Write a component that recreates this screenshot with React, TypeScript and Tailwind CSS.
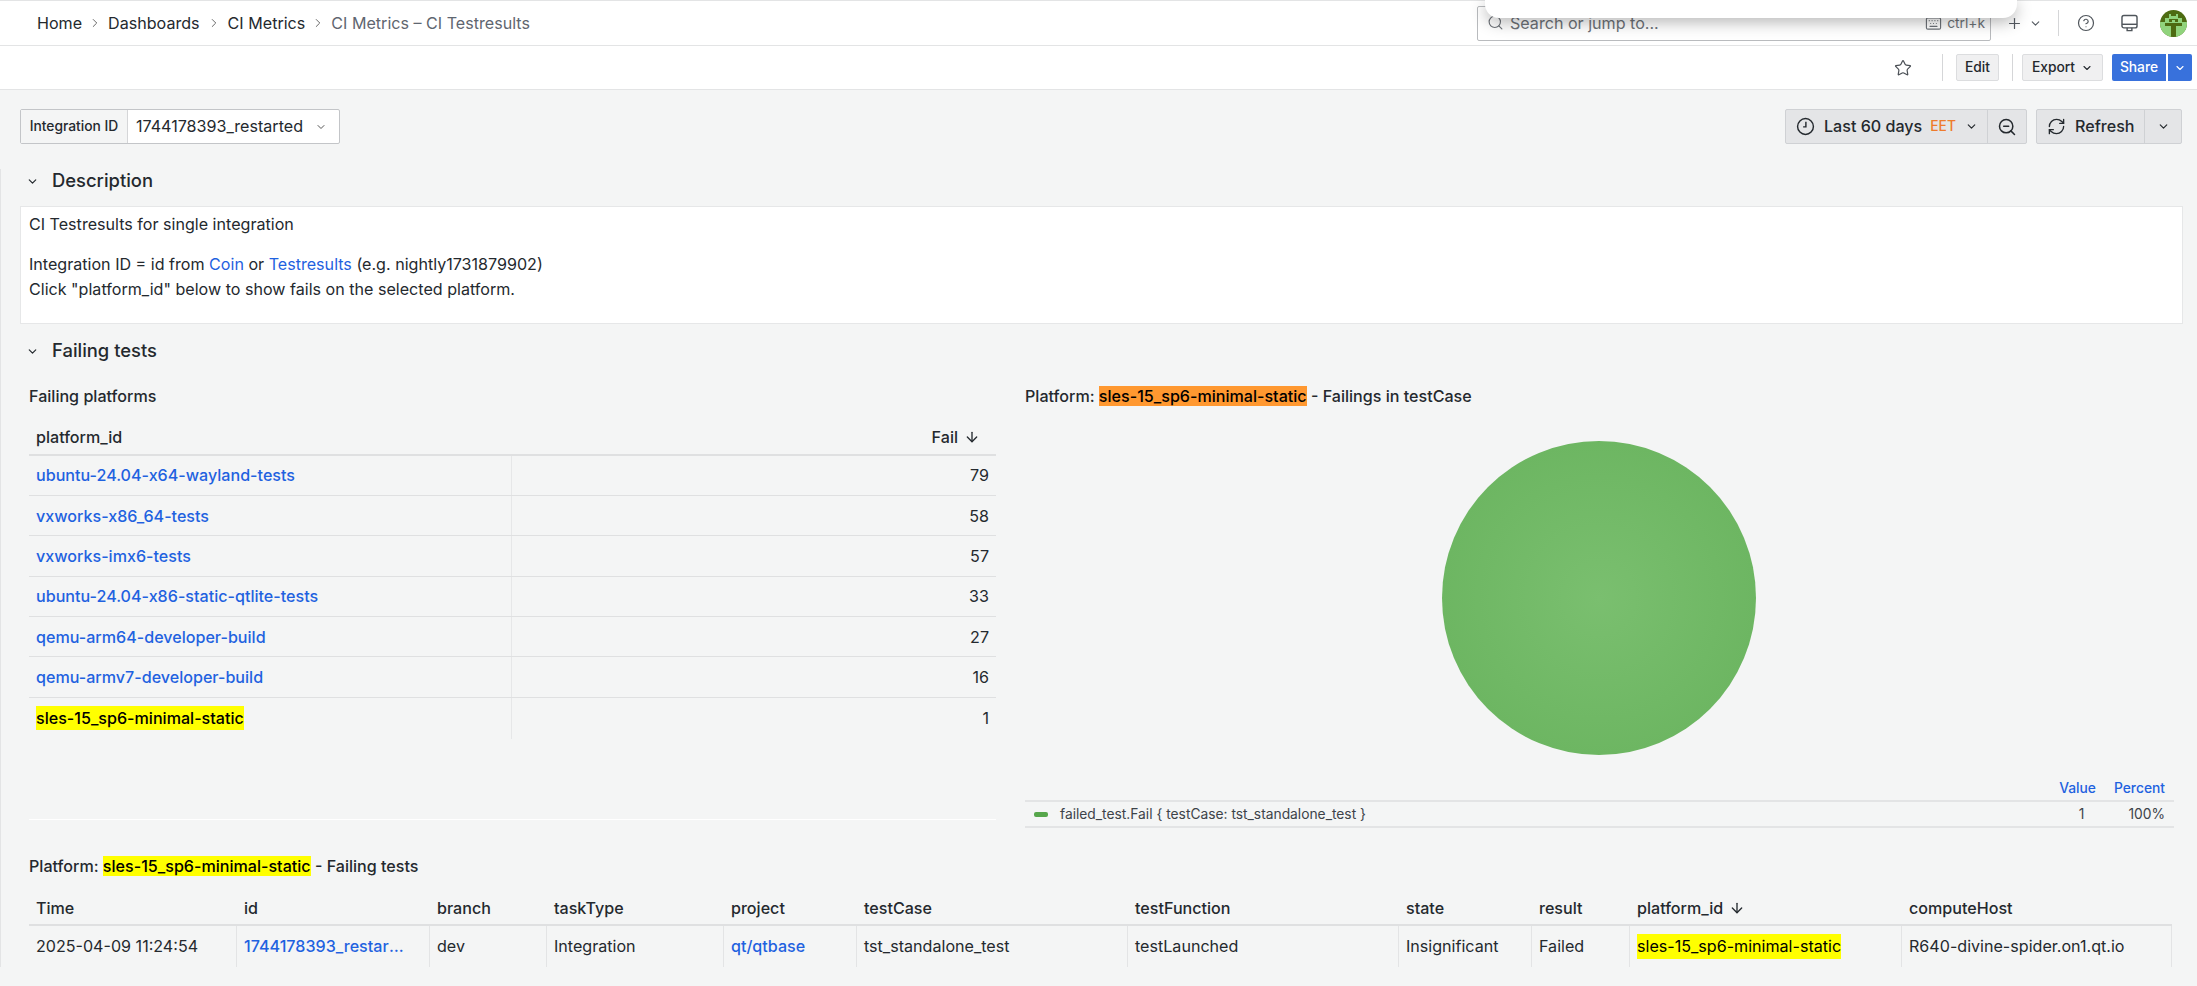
import { ChevronDown, ChevronRight, ZoomOut, RefreshCw, Star, CircleHelp, Plus, Search, Keyboard, ArrowDown } from 'lucide-react'

const platforms = [
  { id: 'ubuntu-24.04-x64-wayland-tests', fail: 79 },
  { id: 'vxworks-x86_64-tests', fail: 58 },
  { id: 'vxworks-imx6-tests', fail: 57 },
  { id: 'ubuntu-24.04-x86-static-qtlite-tests', fail: 33 },
  { id: 'qemu-arm64-developer-build', fail: 27 },
  { id: 'qemu-armv7-developer-build', fail: 16 },
]

const testCols = [
  { name: 'Time', w: 'w-[208px]' },
  { name: 'id', w: 'w-[193px]' },
  { name: 'branch', w: 'w-[117px]' },
  { name: 'taskType', w: 'w-[177px]' },
  { name: 'project', w: 'w-[133px]' },
  { name: 'testCase', w: 'w-[271px]' },
  { name: 'testFunction', w: 'w-[271px]' },
  { name: 'state', w: 'w-[133px]' },
  { name: 'result', w: 'w-[98px]' },
  { name: 'platform_id', w: 'w-[272px]' },
  { name: 'computeHost', w: 'w-[270px]' },
]

function Breadcrumb() {
  return (
    <nav className="ml-[37px] flex items-center text-[16.1px] text-[#24292e]">
      <span>Home</span>
      <ChevronRight className="mx-[6px] h-[14px] w-[14px] text-[#555]" strokeWidth={1.5} />
      <span>Dashboards</span>
      <ChevronRight className="mx-[7px] h-[14px] w-[14px] text-[#555]" strokeWidth={1.5} />
      <span>CI Metrics</span>
      <ChevronRight className="mx-[6px] h-[14px] w-[14px] text-[#555]" strokeWidth={1.5} />
      <span className="text-[#5f6670]">CI Metrics – CI Testresults</span>
    </nav>
  )
}

function ClockIcon() {
  return (
    <svg viewBox="0 0 24 24" fill="none" stroke="currentColor" strokeWidth="1.8" className="h-[19px] w-[19px]">
      <circle cx="12" cy="12" r="10" />
      <path d="M12.5 6v6.5H9" />
    </svg>
  )
}

function MonitorIcon() {
  return (
    <svg viewBox="0 0 24 24" fill="none" stroke="currentColor" strokeWidth="1.8" className="h-[19px] w-[19px] text-[#4f555b]">
      <rect x="2.5" y="2" width="19" height="15.5" rx="2.5" />
      <path d="M2.5 13h19" />
      <path d="M9 17.5v3.5h6v-3.5" />
    </svg>
  )
}

function Avatar() {
  return (
    <svg viewBox="0 0 27 27" className="h-[27px] w-[27px]">
      <clipPath id="avatar-clip">
        <circle cx="13.5" cy="13.5" r="13.5" />
      </clipPath>
      <g clipPath="url(#avatar-clip)" shapeRendering="crispEdges">
        <rect width="27" height="27" fill="#4d6b12" />
        <rect x="0" y="12" width="27" height="15" fill="#90d37c" />
        <rect x="9" y="4" width="9" height="4" fill="#90d37c" />
        <rect x="5" y="8" width="17" height="4" fill="#90d37c" />
        <rect x="11" y="4" width="5" height="2" fill="#4d6b12" />
        <rect x="9" y="9" width="9" height="3" fill="#4d6b12" />
        <rect x="5" y="13" width="17" height="3" fill="#4d6b12" />
        <rect x="11" y="16" width="5" height="11" fill="#4d6b12" />
        <rect x="12" y="10" width="3" height="2" fill="#90d37c" />
      </g>
    </svg>
  )
}

function TopBar() {
  return (
    <header className="relative flex h-[46px] items-center justify-between border-t border-b border-[#e3e4e5] bg-white">
      <Breadcrumb />
      <div className="flex items-center">
        <div className="flex h-[35px] w-[514px] items-center justify-between rounded-[2px] border border-[#b9bbbe] pr-[5px] pl-[9px] text-[#6d7278]">
          <div className="flex items-center gap-[6px]">
            <Search className="h-[17px] w-[17px]" strokeWidth={1.6} />
            <span className="text-[16.1px]">Search or jump to...</span>
          </div>
          <div className="flex items-center gap-[5px] text-[13.8px]">
            <Keyboard className="h-[17px] w-[17px]" strokeWidth={1.6} />
            <span>ctrl+k</span>
          </div>
        </div>
        <Plus className="ml-[15px] h-[17px] w-[17px] text-[#555b62]" strokeWidth={1.7} />
        <ChevronDown className="ml-[6px] h-[13px] w-[13px] text-[#555b62]" strokeWidth={2} />
        <div className="mr-[18px] ml-[16px] h-[26px] w-px bg-[#d5d6d8]" />
        <CircleHelp className="h-[18px] w-[18px] text-[#4f555b]" strokeWidth={1.6} />
        <div className="ml-[25px]">
          <MonitorIcon />
        </div>
        <div className="mr-[10px] ml-[21px]">
          <Avatar />
        </div>
      </div>
      <div className="absolute top-[-1px] left-[1485px] h-[18px] w-[532px] rounded-b-[14px] bg-white shadow-[0_4px_16px_rgba(0,0,0,0.3)]" />
    </header>
  )
}

function ActionBar() {
  return (
    <div className="flex h-[44px] items-center justify-end border-b border-[#e3e4e5] bg-white pr-[5px]">
      <Star className="mr-[30px] h-[18px] w-[18px] text-[#4a4f55]" strokeWidth={1.6} />
      <div className="mr-[13px] h-[27px] w-px bg-[#d5d6d8]" />
      <button className="flex h-[27px] w-[43px] items-center justify-center rounded-[2px] border border-[#dcdddf] bg-[#f0f0f1] text-[13.8px] font-medium text-[#24292e]">
        Edit
      </button>
      <div className="mr-[9px] ml-[13px] h-[27px] w-px bg-[#d5d6d8]" />
      <button className="mr-[9px] flex h-[27px] w-[81px] items-center justify-center gap-[6px] rounded-[2px] border border-[#dcdddf] bg-[#f0f0f1] text-[13.8px] font-medium text-[#24292e]">
        Export
        <ChevronDown className="h-[12px] w-[12px]" strokeWidth={2.2} />
      </button>
      <button className="flex h-[27px] w-[54px] items-center justify-center rounded-l-[2px] bg-[#3871dc] text-[13.8px] font-medium text-white">
        Share
      </button>
      <button className="ml-[2px] flex h-[27px] w-[24px] items-center justify-center rounded-r-[2px] bg-[#3871dc] text-white">
        <ChevronDown className="h-[12px] w-[12px]" strokeWidth={2.2} />
      </button>
    </div>
  )
}

function Toolbar() {
  return (
    <div className="mt-[19px] flex items-start justify-between pr-[15px] pl-[20px]">
      <div className="flex h-[35px] w-[320px] rounded-[2px] border border-[#c3c5c8] bg-white text-[#24292e]">
        <div className="flex w-[107px] items-center justify-center border-r border-[#d5d6d8] bg-[#f4f5f5] text-[13.8px] font-medium">
          Integration ID
        </div>
        <div className="flex flex-1 items-center pl-[8px] text-[16.1px]">
          1744178393_restarted
          <ChevronDown className="ml-[12px] h-[12px] w-[12px] text-[#555]" strokeWidth={2} />
        </div>
      </div>
      <div className="flex items-center gap-[9px] text-[#24292e]">
        <div className="flex h-[35px] w-[242px] rounded-[2px] border border-[#cfd1d4] bg-[#e4e5e7]">
          <div className="flex flex-1 items-center border-r border-[#cfd1d4] pl-[10px] text-[16.1px] font-medium">
            <ClockIcon />
            <span className="ml-[9px]">Last 60 days</span>
            <span className="ml-[8px] text-[13.8px] text-[#ee7b2c]">EET</span>
            <ChevronDown className="ml-[9px] h-[13px] w-[13px]" strokeWidth={2.2} />
          </div>
          <div className="flex w-[38px] items-center justify-center">
            <ZoomOut className="h-[20px] w-[20px]" strokeWidth={1.8} />
          </div>
        </div>
        <div className="flex h-[35px] w-[146px] rounded-[2px] border border-[#cfd1d4] bg-[#e4e5e7]">
          <div className="flex w-[108px] items-center border-r border-[#cfd1d4] pl-[10px] text-[16.1px] font-medium">
            <RefreshCw className="h-[19px] w-[19px]" strokeWidth={1.7} />
            <span className="ml-[9px]">Refresh</span>
          </div>
          <div className="flex flex-1 items-center justify-center">
            <ChevronDown className="h-[13px] w-[13px]" strokeWidth={2.2} />
          </div>
        </div>
      </div>
    </div>
  )
}

function RowTitle({ children, className }: { children: string; className: string }) {
  return (
    <div className={`flex h-[24px] items-center pl-[25px] text-[18.4px] font-medium text-[#24292e] ${className}`}>
      <ChevronDown className="mr-[13px] h-[13px] w-[13px]" strokeWidth={2.2} />
      {children}
    </div>
  )
}

function DescriptionPanel() {
  return (
    <div className="mt-[13px] mr-[14px] ml-[19px] h-[118px] border border-[#e6e7e8] bg-white pt-[7px] pl-[8px] text-[16.1px] text-[#24292e]">
      <p className="h-[25px] leading-[20px]">CI Testresults for single integration</p>
      <p className="mt-[13px] h-[25px] leading-[25px]">
        Integration ID = id from <span className="text-[#1f62e0]">Coin</span> or{' '}
        <span className="text-[#1f62e0]">Testresults</span> (e.g. nightly1731879902)
      </p>
      <p className="h-[25px] leading-[25px]">Click "platform_id" below to show fails on the selected platform.</p>
    </div>
  )
}

function PlatformsTable() {
  return (
    <div className="h-[443px] w-[967px] text-[16.1px] text-[#24292e]">
      <div className="mb-[15px] h-[20px] leading-[20px] font-medium">Failing platforms</div>
      <div className="flex h-[34.5px] items-center justify-between border-b-2 border-[#dfe0e1] pr-[16px] pl-[7px] font-medium">
        <span>platform_id</span>
        <span className="flex items-center gap-[6px]">
          Fail
          <ArrowDown className="h-[16px] w-[16px]" strokeWidth={2} />
        </span>
      </div>
      {platforms.map((p) => (
        <div key={p.id} className="flex h-[40.4px] border-b border-[#dfe0e1]">
          <div className="flex w-[483px] items-center border-r border-[#e6e7e8] pl-[7px] font-medium text-[#1f62e0]">{p.id}</div>
          <div className="flex flex-1 items-center justify-end pr-[7px]">{p.fail}</div>
        </div>
      ))}
      <div className="flex h-[41px]">
        <div className="flex w-[483px] items-center border-r border-[#e6e7e8] pl-[7px]">
          <span className="bg-[#ffff00] font-medium text-black">sles-15_sp6-minimal-static</span>
        </div>
        <div className="flex flex-1 items-center justify-end pr-[7px]">1</div>
      </div>
      <div className="mt-[80px] h-px bg-white" />
    </div>
  )
}

function PiePanel() {
  return (
    <div className="ml-[29px] flex h-[443px] flex-1 flex-col text-[#24292e]">
      <div className="h-[20px] text-[16.1px] leading-[20px] font-medium">
        Platform: <span className="bg-[#ff9830] text-black">sles-15_sp6-minimal-static</span> - Failings in testCase
      </div>
      <div className="flex h-[377px] items-start justify-center pt-[35px] pr-[1px]">
        <svg viewBox="0 0 314 314" className="h-[314px] w-[314px]">
          <defs>
            <radialGradient id="pie-grad">
              <stop offset="0%" stopColor="#7abf6f" />
              <stop offset="100%" stopColor="#6db662" />
            </radialGradient>
          </defs>
          <circle cx="157" cy="157" r="157" fill="url(#pie-grad)" />
        </svg>
      </div>
      <div className="flex h-[11px] items-center justify-end text-[13.8px] font-medium text-[#1f62e0]">
        <span className="mr-[18px]">Value</span>
        <span className="mr-[9px]">Percent</span>
      </div>
      <div className="mt-[6px] flex h-[28px] items-center border-t-2 border-b-2 border-[#e3e4e5] pl-[9px] text-[13.8px] text-[#3d4349]">
        <span className="h-[5px] w-[14px] rounded-[2px] bg-[#56a64b]" />
        <span className="ml-[12px]">{'failed_test.Fail { testCase: tst_standalone_test }'}</span>
        <span className="mr-[44px] ml-auto">1</span>
        <span className="mr-[9px]">100%</span>
      </div>
    </div>
  )
}

function TestsTable() {
  return (
    <div className="mt-[27px] pl-[28px] text-[16.1px] text-[#24292e]">
      <div className="h-[20px] leading-[20px] font-medium">
        Platform: <span className="bg-[#ffff00] text-black">sles-15_sp6-minimal-static</span> - Failing tests
      </div>
      <div className="mt-[17px] flex h-[33px] w-[2143px] items-center border-b-2 border-[#dfe0e1] font-medium">
        {testCols.map((c) => (
          <div key={c.name} className={`flex items-center gap-[6px] pl-[7px] ${c.w}`}>
            {c.name}
            {c.name === 'platform_id' && <ArrowDown className="h-[16px] w-[16px]" strokeWidth={2} />}
          </div>
        ))}
      </div>
      <div className="flex h-[41px] w-[2143px] items-center">
        <Cell w="w-[208px]">2025-04-09 11:24:54</Cell>
        <Cell w="w-[193px]" link>
          <span className="block w-[161px] truncate">1744178393_restarted</span>
        </Cell>
        <Cell w="w-[117px]">dev</Cell>
        <Cell w="w-[177px]">Integration</Cell>
        <Cell w="w-[133px]" link>
          qt/qtbase
        </Cell>
        <Cell w="w-[271px]">tst_standalone_test</Cell>
        <Cell w="w-[271px]">testLaunched</Cell>
        <Cell w="w-[133px]">Insignificant</Cell>
        <Cell w="w-[98px]">Failed</Cell>
        <Cell w="w-[272px]">
          <span className="bg-[#ffff00] text-black">sles-15_sp6-minimal-static</span>
        </Cell>
        <Cell w="w-[270px]">R640-divine-spider.on1.qt.io</Cell>
      </div>
    </div>
  )
}

function Cell({ w, link, children }: { w: string; link?: boolean; children: React.ReactNode }) {
  return (
    <div className={`flex h-full items-center border-r border-[#e3e4e5] pl-[7px] ${w} ${link ? 'font-medium text-[#1f62e0]' : ''}`}>
      {children}
    </div>
  )
}

export default function App() {
  return (
    <div className="h-[986px] w-[2197px] overflow-hidden bg-[#f4f5f5] [font-family:Inter,sans-serif]">
      <TopBar />
      <ActionBar />
      <Toolbar />
      <div className="border-l border-[#e3e4e5]">
        <RowTitle className="mt-[25px]">Description</RowTitle>
        <DescriptionPanel />
        <RowTitle className="mt-[15px]">Failing tests</RowTitle>
        <div className="mt-[23px] flex pr-[23px] pl-[28px]">
          <PlatformsTable />
          <PiePanel />
        </div>
        <TestsTable />
      </div>
    </div>
  )
}
